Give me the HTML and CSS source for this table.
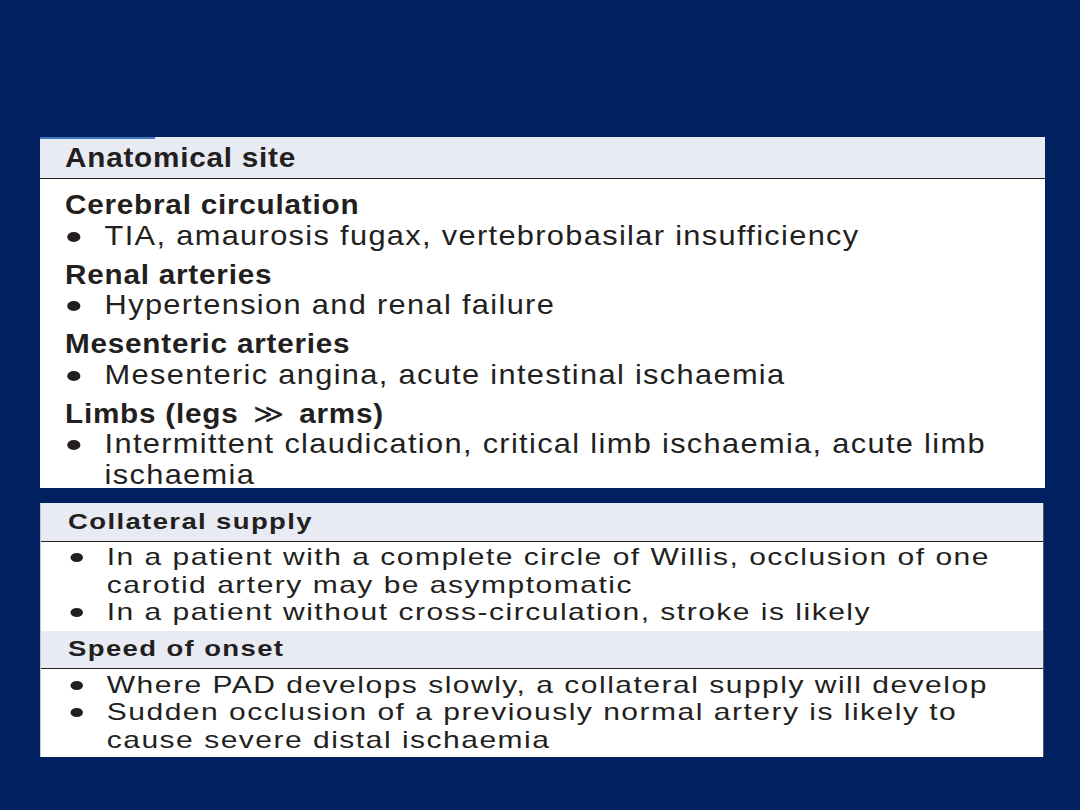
FILE: index.html
```html
<!DOCTYPE html>
<html>
<head>
<meta charset="utf-8">
<link rel="stylesheet" href="styles.css">
</head>
<body>
<div class="slide">
  <section class="box box-site">
    <div class="tab-mark"></div>
    <div class="band site-head"><span class="sx1">Anatomical site</span></div>
    <div class="site-body">
      <div class="sx1 site-inner">
        <div class="group">
          <div class="gh">Cerebral circulation</div>
          <div class="item"><span class="dot"></span><span class="tx">TIA, amaurosis fugax, vertebrobasilar insufficiency</span></div>
        </div>
        <div class="group">
          <div class="gh">Renal arteries</div>
          <div class="item"><span class="dot"></span><span class="tx">Hypertension and renal failure</span></div>
        </div>
        <div class="group">
          <div class="gh">Mesenteric arteries</div>
          <div class="item"><span class="dot"></span><span class="tx">Mesenteric angina, acute intestinal ischaemia</span></div>
        </div>
        <div class="group">
          <div class="gh">Limbs (legs <span class="gg">≫</span> arms)</div>
          <div class="item"><span class="dot"></span><span class="tx">Intermittent claudication, critical limb ischaemia, acute limb ischaemia</span></div>
        </div>
      </div>
    </div>
  </section>

  <section class="box box-supply">
    <div class="band sup-head"><span class="sx2">Collateral supply</span></div>
    <div class="sup-body">
      <div class="sx2 sup-inner">
        <div class="item2"><span class="dot2"></span><span class="tx2">In a patient with a complete circle of Willis, occlusion of one carotid artery may be asymptomatic</span></div>
        <div class="item2"><span class="dot2"></span><span class="tx2">In a patient without cross-circulation, stroke is likely</span></div>
      </div>
    </div>
    <div class="band sup-head sup-head2"><span class="sx2">Speed of onset</span></div>
    <div class="sup-body sup-body2">
      <div class="sx2 sup-inner">
        <div class="item2"><span class="dot2"></span><span class="tx2">Where PAD develops slowly, a collateral supply will develop</span></div>
        <div class="item2"><span class="dot2"></span><span class="tx2">Sudden occlusion of a previously normal artery is likely to cause severe distal ischaemia</span></div>
      </div>
    </div>
  </section>
</div>
</body>
</html>
```

FILE: styles.css
```css
html, body {
  margin: 0;
  padding: 0;
  background: #002060;
}
body {
  width: 1080px;
  height: 810px;
  overflow: hidden;
  font-family: "Liberation Sans", Arial, sans-serif;
  color: #231f20;
}
.slide {
  padding: 137px 0 0 40px;
  display: flex;
  flex-direction: column;
  gap: 15px;
}
.box {
  background: #ffffff;
  position: relative;
}
.box-site {
  width: 1005px;
  height: 351px;
}
.tab-mark {
  position: absolute;
  left: 0;
  top: 0;
  width: 115px;
  height: 2px;
  background: #3f78c0;
}
.band {
  background: #e9ebf4;
  border-bottom: 1px solid #231f20;
  font-weight: bold;
  box-sizing: border-box;
  display: flex;
  align-items: center;
}

/* horizontally stretched type, as in the source image */
.sx1 {
  display: block;
  transform: scaleX(1.1);
  transform-origin: left center;
}
.sx2 {
  display: block;
  transform: scaleX(1.25);
  transform-origin: left center;
}

.site-head {
  height: 42px;
  padding-left: 25px;
  font-size: 27px;
  letter-spacing: 0.7px;
  padding-top: 1px;
}
.site-body {
  padding: 11px 0 0 25px;
  font-size: 28px;
  line-height: 30.5px;
}
.site-inner {
  width: 875px;
}
.group + .group {
  margin-top: 8.5px;
}
.gh {
  font-weight: bold;
  font-size: 27px;
  letter-spacing: 0.7px;
}
.gg {
  font-weight: normal;
  margin: 0 5px;
}
.item {
  display: flex;
  align-items: flex-start;
}
.dot {
  flex: none;
  width: 12px;
  height: 10px;
  border-radius: 50%;
  background: #231f20;
  margin: 11px 22px 0 2px;
}
.tx {
  letter-spacing: 1.2px;
  flex: 1;
}
.box-supply {
  width: 1004px;
  height: 254px;
  border-left: 1px solid #c8c8c8;
  border-right: 1px solid #555555;
  box-sizing: border-box;
}
.sup-head {
  height: 39px;
  padding-left: 27px;
  font-size: 22px;
  letter-spacing: 1.1px;
}
.sup-head2 {
  height: 38px;
}
.sup-body {
  padding: 1px 0 5px 27px;
  font-size: 24px;
  line-height: 27.5px;
}
.sup-body2 {
  padding: 2px 0 3px 27px;
}
.sup-inner {
  width: 770px;
}
.item2 {
  display: flex;
  align-items: flex-start;
}
.dot2 {
  flex: none;
  width: 10px;
  height: 9px;
  border-radius: 50%;
  background: #231f20;
  margin: 10px 19px 0 2px;
}
.tx2 {
  letter-spacing: 1.2px;
  flex: 1;
}
```
